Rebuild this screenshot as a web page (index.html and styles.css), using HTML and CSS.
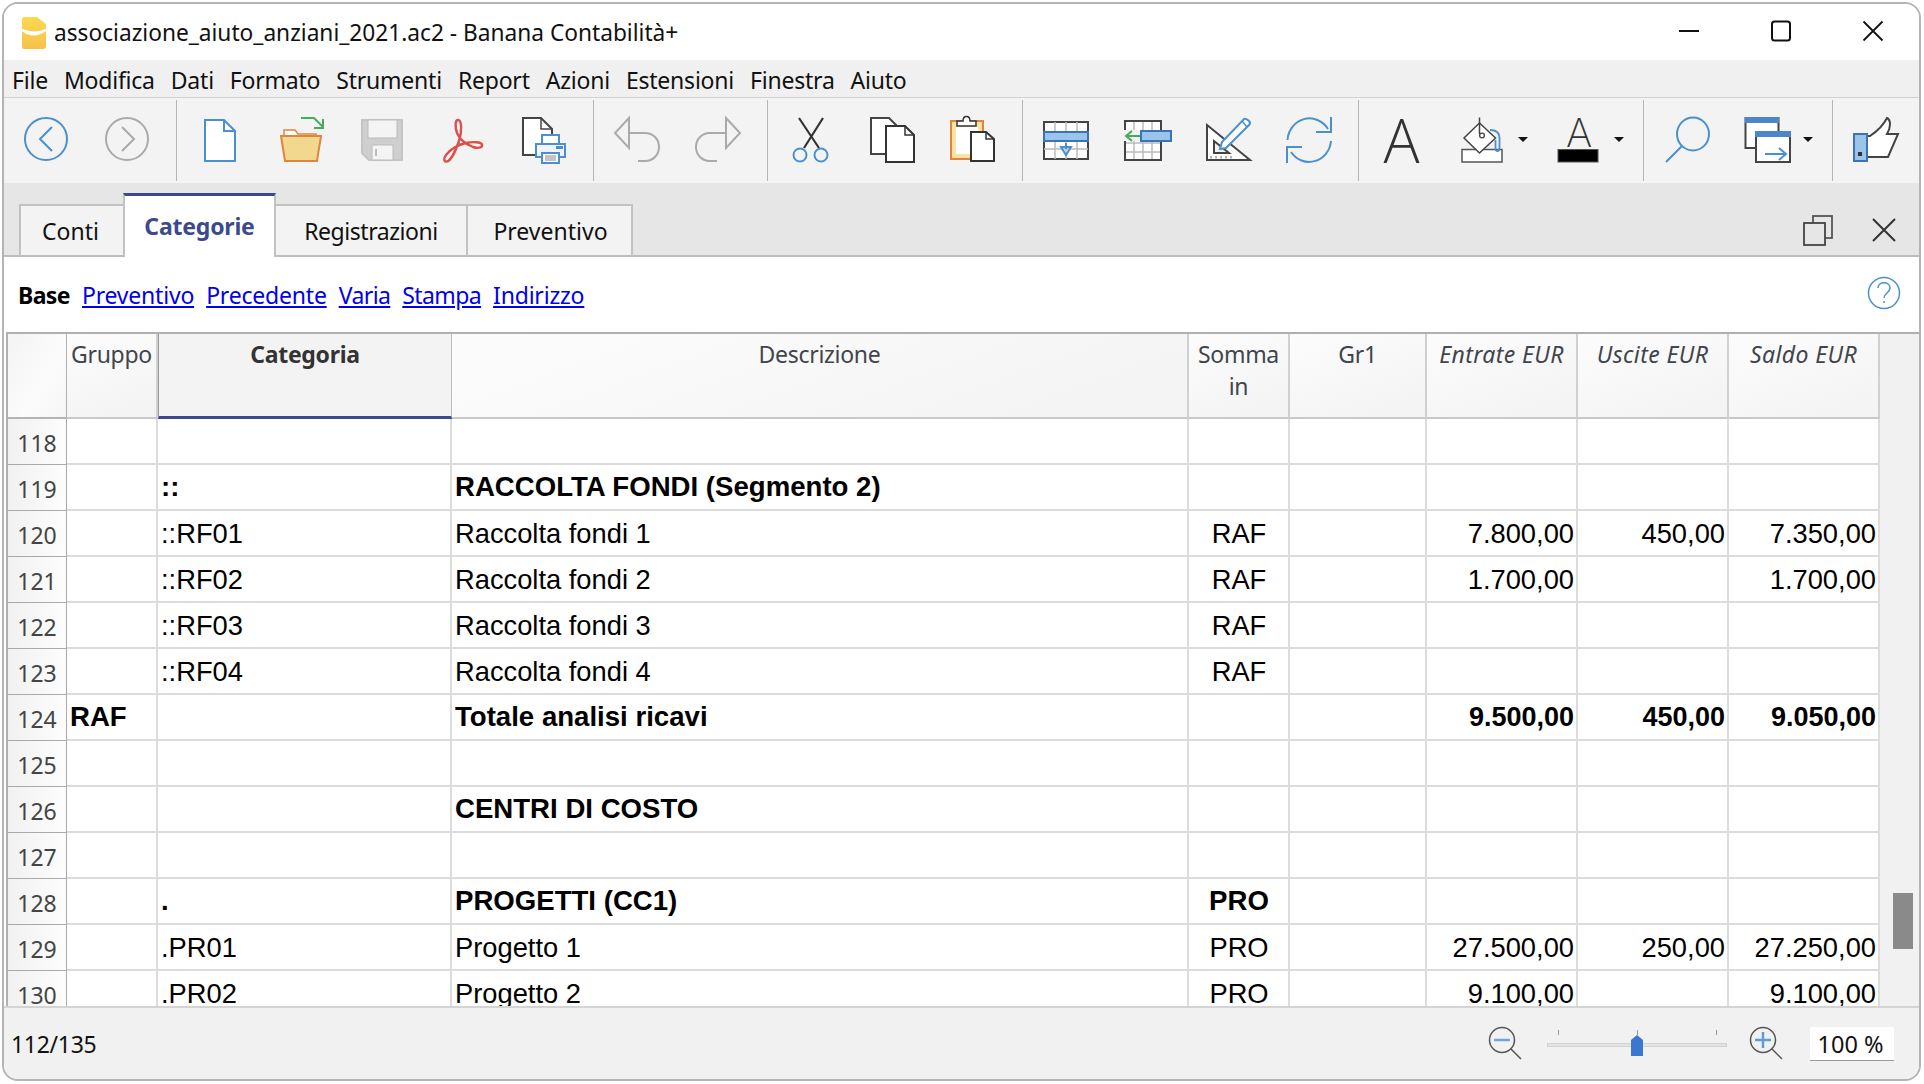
FILE: index.html
```html
<!DOCTYPE html>
<html lang="it">
<head>
<meta charset="utf-8">
<title>associazione_aiuto_anziani_2021.ac2 - Banana Contabilità+</title>
<link rel="stylesheet" href="styles.css">
</head>
<body>
<div class="window">
  <header class="titlebar">
    <svg class="logo" width="26" height="34" viewBox="0 0 26 34"><defs><linearGradient id="lg" x1="0" y1="0" x2="0" y2="1"><stop offset="0" stop-color="#fbd94f"/><stop offset="1" stop-color="#f8c04c"/></linearGradient></defs><path d="M3 1H16L25 8V30Q25 33 22 33H3Q1 33 1 30V4Q1 1 3 1Z" fill="url(#lg)"/><path d="M1 14Q12 23 25 14Q14 19 1 14Z" fill="#fff" stroke="#fff" stroke-width="2"/></svg>
    <span class="title">associazione_aiuto_anziani_2021.ac2 - Banana Contabilità+</span>
    <div class="winctl">
      <svg width="24" height="24" viewBox="0 0 24 24"><path d="M2 12H22" stroke="#111" stroke-width="2"/></svg>
      <svg width="24" height="24" viewBox="0 0 24 24"><rect x="3" y="2.500" width="18" height="19" rx="2.500" fill="none" stroke="#111" stroke-width="2"/></svg>
      <svg width="24" height="24" viewBox="0 0 24 24"><path d="M2.500 2.500L21.500 21.500M21.500 2.500L2.500 21.500" stroke="#111" stroke-width="1.800"/></svg>
    </div>
  </header>
  <nav class="menubar">
    <span>File</span><span>Modifica</span><span>Dati</span><span>Formato</span><span>Strumenti</span><span>Report</span><span>Azioni</span><span>Estensioni</span><span>Finestra</span><span>Aiuto</span>
  </nav>
  <div class="toolbar">
    <div class="tool"><svg width="60" height="60" viewBox="0 0 60 60"><circle cx="30" cy="29" r="21" fill="none" stroke="#4a90cf" stroke-width="2"/><path d="M36 17L24 29L36 41" fill="none" stroke="#4a90cf" stroke-width="2"/></svg></div>
    <div class="tool"><svg width="60" height="60" viewBox="0 0 60 60"><circle cx="30" cy="29" r="21" fill="none" stroke="#aaa" stroke-width="2"/><path d="M25 17L37 29L25 41" fill="none" stroke="#aaa" stroke-width="2"/></svg></div>
    <i class="sep"></i>
    <div class="tool"><svg width="60" height="60" viewBox="0 0 60 60"><path d="M15 10H34L45 21V51H15Z" fill="#fff" stroke="#4a90cf" stroke-width="2"/><path d="M34 10V21H45" fill="none" stroke="#4a90cf" stroke-width="2"/></svg></div>
    <div class="tool"><svg width="60" height="60" viewBox="0 0 60 60"><path d="M13 33V20H24L27 24H45V33Z" fill="#fff" stroke="#e0853a" stroke-width="1.500"/><path d="M10 26H50L46 51H14Z" fill="#f2d88f" stroke="#e0853a" stroke-width="2"/><path d="M30 8H43L52 17M52 9V18H43" fill="none" stroke="#46ab5c" stroke-width="2"/></svg></div>
    <div class="tool"><svg width="60" height="60" viewBox="0 0 60 60"><path d="M10 10H50V50H17L10 43Z" fill="#cfcfcf" stroke="#c4c4c4" stroke-width="2"/><rect x="16" y="10" width="29" height="18" fill="#f4f4f4" stroke="#bbb"/><rect x="20" y="35" width="21" height="15" fill="#f4f4f4" stroke="#bbb"/><path d="M24 39V46" stroke="#aaa" stroke-width="1.500"/></svg></div>
    <div class="tool"><svg width="60" height="60" viewBox="0 0 60 60"><path d="M25 10C22 10 22 17 24 23C27 30 32 34 40 37C46 39 50 37 49 34.500C48 32 40 31.500 33 33C24 35 17 40 13 45C10 49 11 52 14 51.500C18 50 23 40 26 31C29 22 29 10 25 10Z" fill="none" stroke="#dd4f4b" stroke-width="2.400"/></svg></div>
    <div class="tool"><svg width="60" height="60" viewBox="0 0 60 60"><path d="M9 8H27L38 19V45H9Z" fill="#fff" stroke="#444" stroke-width="2"/><path d="M27 8V19H38" fill="none" stroke="#444" stroke-width="1.500"/><rect x="28" y="25" width="17" height="10" fill="#fff" stroke="#4a90cf" stroke-width="2"/><rect x="22" y="34" width="29" height="13" fill="#eef4fa" stroke="#4a90cf" stroke-width="2"/><rect x="28" y="43" width="17" height="10" fill="#fff" stroke="#4a90cf" stroke-width="2"/><path d="M31 46H42M31 48H42M31 50H42" stroke="#888"/><rect x="42" y="36" width="7" height="3" fill="#4a90cf"/></svg></div>
    <i class="sep"></i>
    <div class="tool"><svg width="60" height="60" viewBox="0 0 60 60"><path d="M22 8L8 23L22 38Z" fill="none" stroke="#aaa" stroke-width="2"/><path d="M22 23H38C46 23 52 29 52 37C52 45 46 51 38 51H31" fill="none" stroke="#aaa" stroke-width="2"/></svg></div>
    <div class="tool"><svg width="60" height="60" viewBox="0 0 60 60"><path d="M38 8L52 23L38 38Z" fill="none" stroke="#aaa" stroke-width="2"/><path d="M38 23H22C14 23 8 29 8 37C8 45 14 51 22 51H29" fill="none" stroke="#aaa" stroke-width="2"/></svg></div>
    <i class="sep"></i>
    <div class="tool"><svg width="60" height="60" viewBox="0 0 60 60"><path d="M18 8L38 38M42 8L23 38" stroke="#333" stroke-width="2.200"/><circle cx="19" cy="45" r="6.500" fill="none" stroke="#4a90cf" stroke-width="2"/><circle cx="40" cy="45" r="6.500" fill="none" stroke="#4a90cf" stroke-width="2"/></svg></div>
    <div class="tool"><svg width="60" height="60" viewBox="0 0 60 60"><path d="M9 8H27L34 15V44H9Z" fill="#fff" stroke="#444" stroke-width="2"/><path d="M24 16H43L52 25V52H24Z" fill="#fff" stroke="#333" stroke-width="2"/><path d="M43 16V25H52" fill="none" stroke="#333" stroke-width="1.500"/></svg></div>
    <div class="tool"><svg width="60" height="60" viewBox="0 0 60 60"><rect x="8" y="11" width="32" height="38" fill="#f7e2a8" stroke="#e0853a" stroke-width="2"/><rect x="13" y="17" width="22" height="27" fill="#fff"/><path d="M14 16V11H20C20 5 27 5 27 11H33V16Z" fill="#fff" stroke="#333" stroke-width="1.500"/><path d="M28 22H43L51 29V51H28Z" fill="#fff" stroke="#333" stroke-width="2"/><path d="M43 22V29H51" fill="none" stroke="#333" stroke-width="1.500"/></svg></div>
    <i class="sep"></i>
    <div class="tool"><svg width="60" height="60" viewBox="0 0 60 60"><rect x="8" y="12" width="44" height="37" fill="#fff" stroke="#444" stroke-width="2"/><path d="M19 12V49M30 12V49M41 12V49M8 39H52" stroke="#bbb" stroke-width="1.500"/><rect x="8" y="22" width="44" height="9" fill="#9cc4ea" stroke="#3a73b8" stroke-width="2"/><path d="M25 37H35L30 45Z M30 33V39" fill="none" stroke="#4a90cf" stroke-width="2"/></svg></div>
    <div class="tool"><svg width="60" height="60" viewBox="0 0 60 60"><rect x="8" y="11" width="36" height="39" fill="#fff"/><path d="M17 11V50M26 11V50M35 11V50M8 33H44M8 42H44" stroke="#bbb" stroke-width="1.500"/><path d="M8 20V11H44V50H8V31" fill="none" stroke="#444" stroke-width="2"/><rect x="7" y="20" width="17" height="11" fill="#f3f3f3"/><rect x="24" y="21" width="30" height="10" fill="#9cc4ea" stroke="#3a73b8" stroke-width="2"/><path d="M23 26H10M15 21L9 26L15 31" fill="none" stroke="#46ab5c" stroke-width="2"/></svg></div>
    <div class="tool"><svg width="60" height="60" viewBox="0 0 60 60"><path d="M9 15L52 50H9Z" fill="#fff" stroke="#444" stroke-width="2"/><path d="M16 31L31 43H16Z" fill="#f2f2f2" stroke="#444" stroke-width="2"/><path d="M13 46V48.500M18 46V48.500M23 46V48.500M28 46V48.500M33 46V48.500" stroke="#666"/><path d="M22 39L24 32L46 9Q48 8 51 11Q53 13 51 15L28 38Z" fill="#fff" stroke="#4a90cf" stroke-width="2"/><path d="M44 11L49 17" stroke="#4a90cf" stroke-width="1.500"/></svg></div>
    <div class="tool"><svg width="60" height="60" viewBox="0 0 60 60"><path d="M8.500 30A22 23 0 0 1 49 19M52 7V22H37" fill="none" stroke="#4a90cf" stroke-width="2"/><path d="M52 31A22 23 0 0 1 12 42M8 53V37H23" fill="none" stroke="#4a90cf" stroke-width="2"/></svg></div>
    <i class="sep"></i>
    <div class="tool"><span class="big-a">A</span></div>
    <div class="tool tool-caret"><svg width="85" height="60" viewBox="0 0 85 60"><rect x="10" y="39.500" width="40" height="12.500" fill="#fff" stroke="#555" stroke-width="1.500"/><path d="M27.500 13L43.500 28L27.500 43L12 28Z" fill="#fff" stroke="#444" stroke-width="1.500"/><path d="M27.500 7.500V24" stroke="#444" stroke-width="1.500"/><circle cx="30" cy="25.500" r="2.400" fill="none" stroke="#444" stroke-width="1.300"/><path d="M38 20C44 20 47.500 22 47.500 28V38C47.500 42 43.500 42 43.500 38V30" fill="none" stroke="#4a90cf" stroke-width="1.800"/><path d="M66 27H76L71 32Z" fill="#111"/></svg></div>
    <div class="tool tool-caret tool-color"><span class="small-a">A</span><svg width="85" height="60" viewBox="0 0 85 60"><rect x="10" y="39.500" width="40" height="12.500" fill="#000" stroke="#555"/><path d="M66 27H76L71 32Z" fill="#111"/></svg></div>
    <i class="sep"></i>
    <div class="tool"><svg width="60" height="60" viewBox="0 0 60 60"><ellipse cx="36" cy="24" rx="16" ry="16.500" fill="none" stroke="#4a90cf" stroke-width="2"/><path d="M25 36L9 52" stroke="#4a90cf" stroke-width="2"/></svg></div>
    <div class="tool tool-caret"><svg width="85" height="60" viewBox="0 0 85 60"><rect x="8.500" y="8" width="33" height="30" fill="#fff" stroke="#444" stroke-width="2"/><rect x="8" y="7" width="34" height="6" fill="#4a86c8"/><rect x="19" y="22" width="34" height="30" fill="#fff" stroke="#444" stroke-width="2"/><rect x="18" y="21" width="36" height="6" fill="#4a86c8"/><path d="M28 44H48M42 38L49 44L42 50" fill="none" stroke="#4a90cf" stroke-width="2"/><path d="M66 27H76L71 32Z" fill="#111"/></svg></div>
    <i class="sep"></i>
    <div class="tool"><svg width="60" height="60" viewBox="0 0 60 60"><path d="M21 26H24C30 22 37 16 41 8C45 10 45 17 41 24H52L42 47H21" fill="#fff" stroke="#444" stroke-width="2"/><rect x="8" y="24" width="13" height="27" fill="#9cc4ea" stroke="#3a73b8" stroke-width="2"/><rect x="12" y="42" width="4" height="4" fill="#333"/></svg></div>
  </div>
  <div class="tabbar">
    <div class="tab tab-conti">Conti</div>
    <div class="tab tab-active">Categorie</div>
    <div class="tab tab-reg">Registrazioni</div>
    <div class="tab tab-prev">Preventivo</div>
    <div class="tabctl">
      <svg width="32" height="32" viewBox="0 0 32 32"><rect x="11" y="2" width="19" height="22" fill="none" stroke="#555" stroke-width="1.800"/><rect x="2" y="9" width="21" height="22" fill="#e6e6e6" stroke="#444" stroke-width="1.800"/></svg>
      <svg width="28" height="28" viewBox="0 0 28 28"><path d="M3 3L25 25M25 3L3 25" stroke="#333" stroke-width="2"/></svg>
    </div>
  </div>
  <div class="views">
    <b>Base</b><a href="#">Preventivo</a><a href="#">Precedente</a><a href="#" class="tight">Varia</a><a href="#" class="tight">Stampa</a><a href="#">Indirizzo</a>
    <svg class="help" width="34" height="34" viewBox="0 0 34 34"><ellipse cx="17" cy="17" rx="15.500" ry="15.500" fill="none" stroke="#4a90cf" stroke-width="1.500"/><path d="M11 12C11 5 23 5 23 12C23 17 17 17 17 22M17 25V27" fill="none" stroke="#4a90cf" stroke-width="1.500"/></svg>
  </div>
  <div class="grid-area">
    <div class="grid-clip">
      <table class="grid">
        <colgroup><col class="c0"><col class="c1"><col class="c2"><col class="c3"><col class="c4"><col class="c5"><col class="c6"><col class="c6"><col class="c6"></colgroup>
        <thead>
          <tr><th class="rowno-h"></th><th>Gruppo</th><th class="sel">Categoria</th><th>Descrizione</th><th>Somma in</th><th>Gr1</th><th class="it">Entrate EUR</th><th class="it">Uscite EUR</th><th class="it">Saldo EUR</th></tr>
        </thead>
        <tbody>
          <tr><td class="rowno">118</td><td></td><td></td><td></td><td></td><td></td><td></td><td></td><td></td></tr>
          <tr class="bold"><td class="rowno">119</td><td></td><td>::</td><td>RACCOLTA FONDI (Segmento 2)</td><td></td><td></td><td></td><td></td><td></td></tr>
          <tr><td class="rowno">120</td><td></td><td>::RF01</td><td>Raccolta fondi 1</td><td class="ce">RAF</td><td></td><td class="nu">7.800,00</td><td class="nu">450,00</td><td class="nu">7.350,00</td></tr>
          <tr><td class="rowno">121</td><td></td><td>::RF02</td><td>Raccolta fondi 2</td><td class="ce">RAF</td><td></td><td class="nu">1.700,00</td><td class="nu"></td><td class="nu">1.700,00</td></tr>
          <tr><td class="rowno">122</td><td></td><td>::RF03</td><td>Raccolta fondi 3</td><td class="ce">RAF</td><td></td><td></td><td></td><td></td></tr>
          <tr><td class="rowno">123</td><td></td><td>::RF04</td><td>Raccolta fondi 4</td><td class="ce">RAF</td><td></td><td></td><td></td><td></td></tr>
          <tr class="bold"><td class="rowno">124</td><td>RAF</td><td></td><td>Totale analisi ricavi</td><td></td><td></td><td class="nu">9.500,00</td><td class="nu">450,00</td><td class="nu">9.050,00</td></tr>
          <tr><td class="rowno">125</td><td></td><td></td><td></td><td></td><td></td><td></td><td></td><td></td></tr>
          <tr class="bold"><td class="rowno">126</td><td></td><td></td><td>CENTRI DI COSTO</td><td></td><td></td><td></td><td></td><td></td></tr>
          <tr><td class="rowno">127</td><td></td><td></td><td></td><td></td><td></td><td></td><td></td><td></td></tr>
          <tr class="bold"><td class="rowno">128</td><td></td><td>.</td><td>PROGETTI (CC1)</td><td class="ce">PRO</td><td></td><td></td><td></td><td></td></tr>
          <tr><td class="rowno">129</td><td></td><td>.PR01</td><td>Progetto 1</td><td class="ce">PRO</td><td></td><td class="nu">27.500,00</td><td class="nu">250,00</td><td class="nu">27.250,00</td></tr>
          <tr><td class="rowno">130</td><td></td><td>.PR02</td><td>Progetto 2</td><td class="ce">PRO</td><td></td><td class="nu">9.100,00</td><td class="nu"></td><td class="nu">9.100,00</td></tr>
        </tbody>
      </table>
    </div>
    <div class="scrollbar"><div class="thumb"></div></div>
  </div>
  <footer class="status">
    <span class="count">112/135</span>
    <div class="zoombox">
      <svg width="36" height="36" viewBox="0 0 36 36"><circle cx="14" cy="14" r="12.500" fill="none" stroke="#555" stroke-width="1.500"/><path d="M6 14H22" stroke="#6fa5dc" stroke-width="2.500"/><path d="M23 23L33 33" stroke="#555" stroke-width="1.500"/></svg>
      <div class="slider"><i class="tick t1"></i><i class="tick t2"></i><i class="tick t3"></i><div class="track"></div><svg class="knob" width="12" height="21" viewBox="0 0 12 21"><path d="M6 0L12 5V21H0V5Z" fill="#3a78d0"/></svg></div>
      <svg width="36" height="36" viewBox="0 0 36 36"><circle cx="14" cy="14" r="12.500" fill="none" stroke="#555" stroke-width="1.500"/><path d="M6 14H22M14 6V22" stroke="#5f9bd8" stroke-width="2.500"/><path d="M23 23L33 33" stroke="#555" stroke-width="1.500"/></svg>
      <div class="pct">100 %</div>
    </div>
  </footer>
</div>
</body>
</html>
```
FILE: styles.css
```css
* { box-sizing: border-box; }
html, body { margin: 0; padding: 0; background: #fff; overflow: hidden; }
body { width: 1924px; height: 1084px; font-family: "Noto Sans", sans-serif; font-size: 23px; color: #111; }
.window { margin: 2px 0 0 2px; width: 1919px; height: 1079px; border: 2px solid #b4b4b4; border-radius: 16px; overflow: hidden; display: flex; flex-direction: column; background: #fff; }
.titlebar { height: 56px; flex: none; display: flex; align-items: center; padding-left: 17px; background: #fff; }
.logo { margin-right: 7px; margin-top: 2px; }
.title { font-size: 22.7px; color: #111; }
.winctl { margin-left: auto; display: flex; gap: 68px; padding-right: 34px; margin-bottom: 2px; }
.menubar { height: 38px; flex: none; display: flex; align-items: center; padding-left: 8px; background: #f0f0f0; border-bottom: 1px solid #d2d2d2; gap: 16px; letter-spacing: -0.22px; }
.menubar span { line-height: 36px; margin-top: 2px; }
.toolbar { height: 85px; flex: none; display: flex; align-items: center; padding-left: 1px; background: #f3f3f3; }
.tool { width: 81px; height: 85px; flex: none; display: flex; align-items: center; justify-content: center; position: relative; padding-bottom: 2px; }
.tool-caret { width: 96px; justify-content: flex-start; padding-left: 10px; }
.sep { display: block; width: 1px; height: 81px; background: #b5b5b5; margin: 0 2px 0 9px; flex: none; }
.big-a { font: 300 60px/60px "Open Sans", sans-serif; color: #333; }
.small-a { position: absolute; left: 28px; top: 10px; font: 200 40px/50px "Inter", sans-serif; color: #333; }
.tabbar { height: 74px; flex: none; display: flex; align-items: flex-end; padding-left: 15px; background: #e6e6e6; border-bottom: 2px solid #bdbdbd; position: relative; }
.tab { height: 53px; margin-bottom: -2px; display: flex; align-items: center; justify-content: center; background: #f3f3f3; border: 2px solid #c2c2c2; border-bottom: 2px solid #bdbdbd; font-size: 23px; }
.tab-conti { width: 104px; border-right: 0; padding-right: 3px; }
.tab-active { width: 153px; height: 64px; background: #fff; border: 2px solid #c2c2c2; border-top: 3px solid #3b4a8f; border-bottom: 0; color: #3b4a8f; font-weight: 700; letter-spacing: -0.2px; padding-bottom: 1px; }
.tab-reg { width: 192px; border-left: 0; letter-spacing: -0.45px; }
.tab-prev { width: 165px; border-left: 0; padding-left: 2px; }
.tabctl { margin-left: auto; display: flex; align-items: center; gap: 36px; padding-right: 21px; align-self: center; margin-top: 22px; }
.views { height: 75px; flex: none; display: flex; align-items: center; gap: 12px; padding-left: 14px; font-size: 23px; padding-right: 18px; letter-spacing: -0.2px; }
.views b { color: #000; letter-spacing: -0.6px; }
.views a { color: #0000ee; text-decoration: underline; }
.views a.tight { letter-spacing: -0.6px; }
.help { margin-left: auto; margin-top: -4px; }
.grid-area { flex: 1; min-height: 0; display: flex; padding-left: 2px; }
.grid-clip { width: 1874px; flex: none; overflow: hidden; border-top: 2px solid #b0b0b0; border-left: 2px solid #b0b0b0; }
.grid { width: 1872px; table-layout: fixed; border-collapse: separate; border-spacing: 0; font: 27.3px "Liberation Sans", sans-serif; color: #000; }
.c0 { width: 59px; } .c1 { width: 91px; } .c2 { width: 294px; } .c3 { width: 737px; } .c4 { width: 101px; } .c5 { width: 137px; } .c6 { width: 151px; }
.grid th { height: 85px; vertical-align: top; font: 400 23px/32px "Noto Sans", sans-serif; color: #3f454c; padding: 4px 2px 0; letter-spacing: -0.3px; background: linear-gradient(160deg, #fcfcfc, #f3f3f3); border-right: 2px solid #d0d0d0; border-bottom: 2px solid #c8c8c8; text-align: center; }
.grid th.sel { font-weight: 700; color: #333; background: #f3f3f3; border-bottom: 3px solid #3b4a8f; border-left: 1px solid #999; border-right: 1px solid #bbb; }
.grid th.it { font-style: italic; letter-spacing: 0.4px; }
.grid th.rowno-h { background: linear-gradient(120deg, #f4f4f4, #fbfbfb 60%, #f6f6f6); border-right: 1px solid #b0b0b0; border-bottom: 2px solid #b4b4b4; }
.grid td { height: 46px; padding: 1px 2px 0 3px; border-right: 2px solid #dcdcdc; border-bottom: 2px solid #dcdcdc; white-space: nowrap; overflow: hidden; background: #fff; }
.grid td.rowno { font: 23px "Noto Sans", sans-serif; color: #444; text-align: center; padding: 2px 0 0; background: linear-gradient(90deg, #f1f1f1, #fdfdfd); border-right: 1px solid #aaa; border-bottom: 1px solid #aaa; }
.grid .bold td { font-weight: 700; font-size: 27.6px; padding-top: 0; }
.grid .bold td.nu { font-size: 27px; }
.grid .bold td.rowno { font-weight: 400; font-size: 23px; padding-top: 2px; }
.grid td.ce { text-align: center; }
.grid td.nu { text-align: right; }
.scrollbar { flex: 1; background: #f1f1f1; border-top: 2px solid #b0b0b0; padding: 559px 6px 0 13px; }
.thumb { height: 56px; background: #8a8a8a; }
.status { height: 73px; flex: none; display: flex; align-items: center; background: #f1f1f1; border-top: 2px solid #d4d4d4; padding-left: 7px; padding-right: 25px; }
.count { letter-spacing: -0.3px; }
.zoombox { margin-left: auto; display: flex; align-items: center; }
.slider { width: 180px; height: 36px; margin: 0 22px 0 23px; position: relative; }
.track { position: absolute; left: 0; right: 0; top: 17px; height: 4px; background: #e4e4e4; border: 1px solid #d2d2d2; }
.tick { position: absolute; top: 4px; width: 1px; height: 5px; background: #999; }
.t1 { left: 11px; } .t2 { left: 90px; } .t3 { left: 169px; }
.knob { position: absolute; left: 84px; top: 9px; }
.pct { width: 84px; height: 34px; margin-left: 25px; padding-right: 3px; background: #fff; border-bottom: 1px solid #999; text-align: center; line-height: 34px; font-size: 23.5px; }
```
